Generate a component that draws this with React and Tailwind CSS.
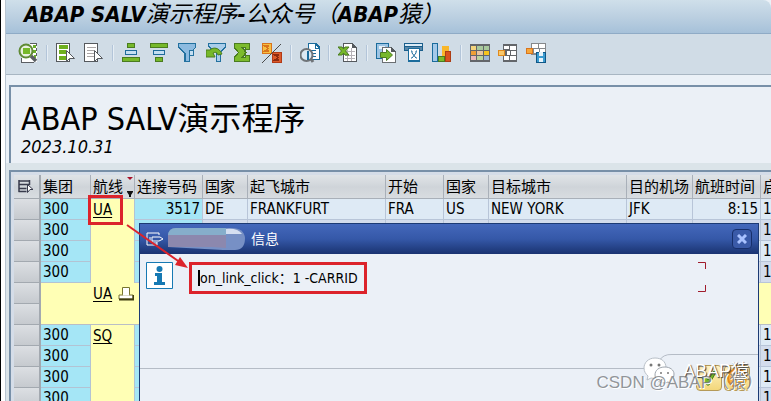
import React from 'react';
import clsx from 'clsx';

const FONT = "font-['DejaVu_Sans_Condensed','Noto_Sans_CJK_SC',sans-serif]";

/* ---------- toolbar icons, 20x20 pixel grid ---------- */

const Icon = ({ children }) => (
  <svg viewBox="0 0 20 20" className="w-5 h-5" shapeRendering="crispEdges" aria-hidden="true">
    {children}
  </svg>
);

const DetailsIcon = () => (
  <Icon>
    <path d="M4 1h15v18H3v-4h1z" fill="#fff" />
    <path d="M15 3h3M15 8h3M16 13h2" stroke="#6cae2c" strokeWidth="3" />
    <path d="M12 .5h7M18.500 0v3M18.500 5v3M18.500 10v3M3 19.500h13M3.500 15v4" stroke="#5b5f63" />
    <g shapeRendering="auto">
      <circle cx="8" cy="8" r="6.500" fill="#e9f0e0" stroke="#5f8a35" strokeWidth="2" />
      <path d="M5 5h7v6H5z" fill="#76b82a" />
      <path d="M13 13l5 5" stroke="#5b5f63" strokeWidth="3.500" />
    </g>
  </Icon>
);

const SelectAllIcon = () => (
  <Icon>
    <path d="M.5.500h13v18H.500z" fill="#fff" stroke="#55595d" />
    <path d="M3 4h9M3 9h7M3 15h7" stroke="#6fb01f" strokeWidth="4" />
    <path d="M10.500 7.500v11l3-3h5z" fill="#fff" stroke="#55595d" shapeRendering="auto" />
  </Icon>
);

const DeselectIcon = () => (
  <Icon>
    <path d="M.5.500h13v18H.500z" fill="#fff" stroke="#55595d" />
    <path d="M3 4.500h9M3 7.500h7M3 10.500h7M3 13.500h7" stroke="#aaa6a6" />
    <path d="M10.500 7.500v11l3-3h5z" fill="#fff" stroke="#55595d" shapeRendering="auto" />
  </Icon>
);

const SortAscIcon = () => (
  <Icon>
    <path d="M5 0h8v5H5z" fill="#4a7c1f" />
    <path d="M6 1h6v3H6z" fill="#76b82a" />
    <path d="M3 7h12v5H3z" fill="#1f6c9b" />
    <path d="M4 8h10v3H4z" fill="#c5dff2" />
    <path d="M0 14h18v5H0z" fill="#4a7c1f" />
    <path d="M1 15h16v3H1z" fill="#76b82a" />
  </Icon>
);

const SortDescIcon = () => (
  <Icon>
    <path d="M0 0h18v5H0z" fill="#4a7c1f" />
    <path d="M1 1h16v3H1z" fill="#76b82a" />
    <path d="M3 7h12v5H3z" fill="#1f6c9b" />
    <path d="M4 8h10v3H4z" fill="#c5dff2" />
    <path d="M5 14h8v5H5z" fill="#4a7c1f" />
    <path d="M6 15h6v3H6z" fill="#76b82a" />
  </Icon>
);

const FilterIcon = () => (
  <Icon>
    <path d="M0 0h18v5l-6 5v9H6v-9L0 5z" fill="#23719f" />
    <path d="M1 1h16v3l-6 6v8H8v-8L1 4z" fill="#8dbbe0" />
    <path d="M11.500 7.500h4v5h-4z" fill="#c5dff2" stroke="#23719f" />
  </Icon>
);

const UnfilterIcon = () => (
  <Icon>
    <path d="M2 0h18v4l-5 5v10h-5V9L2 4z" fill="#23719f" />
    <path d="M3 1h16v2l-5 5v10h-3V8L3 3z" fill="#a9cdea" />
    <path
      d="M0 7l4 0c3-3 9-3 12 4l-4 1c-1-3-3-3-5-2l2 4H0z"
      fill="#76b82a"
      stroke="#4a7c1f"
      shapeRendering="auto"
    />
  </Icon>
);

const SumIcon = () => (
  <Icon>
    <path d="M0 0h16v7h-5V5h-1l3 4.500L10 14h1v-2h5v7H0v-5l4-4.500L0 5z" fill="#4a7c1f" />
    <path d="M1 1h14v5h-3V4H7l4 5.500L7 15h5v-2h3v5H1v-3l4-5.500L1 4z" fill="#7cbb2c" />
  </Icon>
);

const SubtotalIcon = () => (
  <Icon>
    <path d="M0 0h10v11H0z" fill="#d9741c" />
    <path d="M1 1h8v9H1z" fill="#f6bf42" />
    <path d="M7 3H3l3 2.500L3 8h4" fill="none" stroke="#d9741c" strokeWidth="1.500" />
    <path d="M10 9h10v11H10z" fill="#b23a16" />
    <path d="M11 10h8v9h-8z" fill="#dc5a2a" />
    <path d="M17 12h-4l3 2.500-3 2.500h4" fill="none" stroke="#8c2a10" strokeWidth="1.500" />
    <path d="M19 1L0 20" stroke="#4b4b4b" shapeRendering="auto" />
  </Icon>
);

const PreviewIcon = () => (
  <Icon>
    <path d="M8.500.500h7l4 4v12h-11z" fill="#fff" stroke="#1b6c9c" strokeWidth="1.500" />
    <path d="M15 1v4h4M11 7.500h5M11 10.500h5M11 13.500h5" fill="none" stroke="#1b6c9c" />
    <g shapeRendering="auto">
      <circle cx="6.500" cy="12" r="6" fill="#dce9f3" stroke="#6f7478" strokeWidth="2" />
      <path d="M8 8v9" stroke="#1b6c9c" strokeWidth="2" />
      <path d="M11 16l2 3" stroke="#6f7478" strokeWidth="3" />
    </g>
  </Icon>
);

const ExcelIcon = () => (
  <Icon>
    <path d="M5.500.500h9l4 4v14h-13z" fill="#fff" stroke="#55595d" />
    <path d="M14 0l5 5h-5z" fill="#55595d" />
    <path d="M7 8.500h10M7 12.500h10M7 15.500h10M9.500 7v11M13.500 5v13" stroke="#b5b1b6" />
    <g shapeRendering="auto">
      <path d="M0 4h4l1.500 2L7 4h4L7.500 8l3.500 4H7l-1.500-2L4 12H0l3.500-4z" fill="#76b82a" stroke="#4a7c1f" />
    </g>
  </Icon>
);

const ExportIcon = () => (
  <Icon>
    <path d="M.5.500h12v15H.500z" fill="#9cc4e4" stroke="#1b6c9c" />
    <path d="M3 3h6v3H3z" fill="#e8f2f9" />
    <path d="M6.500 4.500h9l4 4v11h-13z" fill="#fff" stroke="#6b6f72" />
    <path d="M15 4l5 5h-5z" fill="#55595d" />
    <path d="M4.500 9.500h6v-3l6 5.500-6 5.500v-3h-6z" fill="#76b82a" stroke="#4a7c1f" shapeRendering="auto" />
  </Icon>
);

const PrintIcon = () => (
  <Icon>
    <path d="M0 0h19v8H0z" fill="#1b5f8c" />
    <path d="M1 1h17v2H1z" fill="#dcebf6" />
    <path d="M1 4h17v3H1z" fill="#5a87a8" />
    <path d="M4 5h12v14H4z" fill="#1b6c9c" />
    <path d="M5 6h10v11H5z" fill="#fff" />
    <path d="M7 8h1v2l4 5h1M13 8h-1v2l-4 5H7" fill="none" stroke="#1b6c9c" shapeRendering="auto" />
  </Icon>
);

const ChartIcon = () => (
  <Icon>
    <path d="M0 0h6v19H0z" fill="#1b6c9c" />
    <path d="M1 1h4v17H1z" fill="#a5c9e8" />
    <path d="M10 3h7v11h-7z" fill="#f9b72b" />
    <path d="M13 8h6v11h-6z" fill="#ad3d14" />
    <path d="M14 9h4v9h-4z" fill="#d9531f" />
    <path d="M6 13h7v6H6z" fill="#4a7c1f" />
    <path d="M7 14h5v4H7z" fill="#7cbb2c" />
  </Icon>
);

const LayoutIcon = () => (
  <Icon>
    <path d="M0 1h20v18H0z" fill="#63666a" />
    <path d="M1 3h5v4H1z" fill="#f3d47d" />
    <path d="M7 3h6v4H7zM14 3h5v4h-5z" fill="#a8c99d" />
    <path d="M1 8h5v4H1z" fill="#ef9f35" />
    <path d="M7 8h6v4H7z" fill="#e9c5a0" />
    <path d="M14 8h5v4h-5z" fill="#f7c31d" />
    <path d="M1 13h5v4H1z" fill="#e9b9b9" />
    <path d="M7 13h6v4H7z" fill="#b9d39b" />
    <path d="M14 13h5v4h-5z" fill="#9fb5d8" />
  </Icon>
);

const ChangeLayoutIcon = () => (
  <Icon>
    <path d="M5 1h14v18H5z" fill="#63666a" />
    <path d="M6 3h5v3H6zM12 3h6v4h-6zM9 8h3v4H9zM13 8h5v4h-5zM6 13h5v4H6zM12 13h6v4h-6z" fill="#fff" />
    <path d="M0 7h7v6H0z" fill="#e08a1e" />
    <path d="M1 8h5v4H1z" fill="#f9c86a" />
  </Icon>
);

const SaveLayoutIcon = () => (
  <Icon>
    <path d="M5 0h15v12H5z" fill="#85888b" />
    <path d="M6 1h6v4H6zM13 1h6v4h-6zM8 6h5v4H8zM14 6h5v4h-5z" fill="#fff" />
    <path d="M0 5h7v6H0z" fill="#d9741c" />
    <path d="M1 6h5v4H1z" fill="#f6a73a" />
    <path d="M10 9h10v11H10z" fill="#0f5786" />
    <path d="M11 10h8v9h-8z" fill="#3b9bd0" />
    <path d="M13 9h4v4h-4zM13 15h4v4h-4z" fill="#e6f3fa" />
  </Icon>
);

const TOOL_GROUPS = [
  [{ label: 'Details', icon: DetailsIcon }],
  [{ label: 'Select all', icon: SelectAllIcon }, { label: 'Deselect all', icon: DeselectIcon }],
  [
    { label: 'Sort ascending', icon: SortAscIcon },
    { label: 'Sort descending', icon: SortDescIcon },
    { label: 'Filter', icon: FilterIcon },
    { label: 'Delete filter', icon: UnfilterIcon },
    { label: 'Total', icon: SumIcon },
    { label: 'Subtotals', icon: SubtotalIcon },
  ],
  [{ label: 'Print preview', icon: PreviewIcon }],
  [{ label: 'Spreadsheet', icon: ExcelIcon }],
  [
    { label: 'Export', icon: ExportIcon },
    { label: 'Print', icon: PrintIcon },
    { label: 'Graphic', icon: ChartIcon },
  ],
  [
    { label: 'Select layout', icon: LayoutIcon },
    { label: 'Change layout', icon: ChangeLayoutIcon },
    { label: 'Save layout', icon: SaveLayoutIcon },
  ],
];

/* ---------- grid data ---------- */

const COLUMNS = [
  { title: '集团', width: 'w-[50px]' },
  { title: '航线', width: 'w-[44px]', sorted: true },
  { title: '连接号码', width: 'w-[68px]' },
  { title: '国家', width: 'w-[45px]' },
  { title: '起飞城市', width: 'w-[138px]' },
  { title: '开始', width: 'w-[58px]' },
  { title: '国家', width: 'w-[45px]' },
  { title: '目标城市', width: 'w-[138px]' },
  { title: '目的机场', width: 'w-[66px]' },
  { title: '航班时间', width: 'w-[68px]' },
  { title: '启', width: '' },
];

const ROWS = [
  { client: '300', carrier: 'UA', rest: ['3517', 'DE', 'FRANKFURT', 'FRA', 'US', 'NEW YORK', 'JFK', '8:15', '1'] },
  { client: '300', rest: ['', '', '', '', '', '', '', '', '1'] },
  { client: '300', rest: ['', '', '', '', '', '', '', '', '1'] },
  { client: '300', rest: ['', '', '', '', '', '', '', '', '1'] },
  { subtotal: 'UA' },
  { blank: true },
  { client: '300', carrier: 'SQ', rest: ['', '', '', '', '', '', '', '', '1'] },
  { client: '300', rest: ['', '', '', '', '', '', '', '', '1'] },
  { client: '300', rest: ['', '', '', '', '', '', '', '', '1'] },
  { client: '300', rest: ['', '', '', '', '', '', '', '', '1'] },
];

const SelectorCell = () => (
  <td className="p-0 bg-linear-to-b from-[#dcdfe3] to-[#c6cacf] border-b border-r-2 border-[#a3a9b0]" />
);

function GridRow({ row, index }) {
  if (row.subtotal || row.blank) {
    return (
      <tr className="h-[21px]">
        <SelectorCell />
        <td className={clsx('p-0 bg-[#ffffb5]', row.blank && 'border-b border-[#b9bec6]')} />
        <td colSpan={10} className={clsx('p-0 pl-0.5 bg-[#ffffb5]', row.blank && 'border-b border-[#b9bec6]')}>
          {row.subtotal && (
            <div className="flex gap-1.5 items-center">
              <a href="#ua" className="underline underline-offset-2">{row.subtotal}</a>
              <svg viewBox="0 0 16 14" className="w-4 h-3.5" aria-hidden="true">
                <path d="M4.500.500h7v7h-7zM1 8h14v4H1z" fill="#fff" stroke="#77752e" />
                <path d="M5 7.500h6" stroke="#fff" strokeWidth="2" />
                <path d="M1 12.500h14.500V8" fill="none" stroke="#3f3d10" strokeWidth="2" />
              </svg>
            </div>
          )}
        </td>
      </tr>
    );
  }

  return (
    <tr className={clsx('h-[21px]', index % 2 ? 'bg-[#d3dcec]' : 'bg-[#deeaf5]')}>
      <SelectorCell />
      <td className="p-0 pl-0.5 bg-[#a5e6f6] border-r border-b border-[#b3c3d3]">{row.client}</td>
      <td className="p-0 pl-0.5 bg-[#ffffb5] border-r border-[#b3c3d3]">
        {row.carrier && <a href={`#${row.carrier}`} className="underline underline-offset-2">{row.carrier}</a>}
      </td>
      {row.rest.map((value, i) => (
        <td
          key={i}
          className={clsx(
            'p-0 px-0.5 whitespace-nowrap border-b border-[#b8c5d8]',
            i < 8 && 'border-r',
            i === 0 && 'bg-[#a5e6f6]',
            (i === 0 || i === 7) && 'text-right'
          )}
        >
          {value}
        </td>
      ))}
    </tr>
  );
}

function FlightGrid() {
  return (
    <table className="w-full table-fixed border-separate border-spacing-0 text-[15px] leading-5">
      <thead>
        <tr className="h-6 bg-linear-to-b from-[#e0e4e7] via-[#cfd4d9] to-[#d9dde1]">
          <th className="w-[27px] p-0 border-r-2 border-b border-[#a3a9b0]">
            <svg viewBox="0 0 16 13" className="ml-1 w-4 h-[13px]" role="img" aria-label="Select all rows">
              <path d="M.5 1h11M.500 4.500h11M.500 8.500h8M.500 11.500h8M1 0v12M11.500 0v5" fill="none" stroke="#383b4c" strokeWidth="1.500" />
              <path d="M9.500 4.500v8l2.500-3h3z" fill="#fff" stroke="#383b4c" />
            </svg>
          </th>
          {COLUMNS.map((col, i) => (
            <th
              key={i}
              className={clsx(
                'p-0 pl-0.5 text-left font-normal whitespace-nowrap border-b border-[#a9b0b9]',
                i < COLUMNS.length - 1 && 'border-r',
                col.width
              )}
            >
              {col.sorted ? (
                <div className="flex justify-between">
                  {col.title}
                  <svg viewBox="0 0 8 20" className="w-2 h-5" aria-hidden="true">
                    <path d="M1 0h6L4 3z" fill="#a8102a" />
                    <path d="M1 14h6v1L5 18v2H3v-2L1 15z" fill="#111" />
                  </svg>
                </div>
              ) : (
                col.title
              )}
            </th>
          ))}
        </tr>
      </thead>
      <tbody>
        {ROWS.map((row, i) => <GridRow key={i} row={row} index={i} />)}
      </tbody>
    </table>
  );
}

/* ---------- message popup ---------- */

function InfoDialog() {
  return (
    <section
      role="dialog"
      aria-labelledby="dialog-title"
      className="flex absolute right-3 -bottom-5 left-[139px] top-[223px] flex-col border border-[#1c3a74] bg-[#ebf0f7]"
    >
      <header className="flex gap-1 items-center px-1.5 h-[30px] text-white bg-linear-to-b from-[#4468bb] via-[#3558a8] to-[#1a3371]">
        <svg viewBox="0 0 18 14" className="w-[18px] h-3.5" aria-hidden="true">
          <path d="M13 3V1H1v12h10v-3M6 5h8l3 2-4 2H6zM4 5v4M6 9v2h5" fill="none" stroke="#fff" />
        </svg>
        {/* blurred out transaction name */}
        <svg viewBox="0 0 79 24" className="w-[79px] h-6 shrink-0" aria-hidden="true">
          <path d="M0 9Q0 1 8 1h56q12 0 13 10 0 12-10 12H55L0 20z" fill="#7790c5" />
          <path d="M0 8Q1 1 8 1h50v7z" fill="#86aecb" />
          <path d="M58 2q12-1 16 5H58z" fill="#d5dff1" />
          <path d="M0 8h58v13l-14-1H0z" fill="#8c88ae" />
        </svg>
        <h2 id="dialog-title" className="text-sm">信息</h2>
        <button
          type="button"
          aria-label="Close"
          className="flex justify-center items-center ml-auto w-5 h-5 rounded-sm border border-[#172f6b] bg-[#3a5aa8]"
        >
          <svg viewBox="0 0 10 10" className="w-2.5 h-2.5" aria-hidden="true">
            <path d="M1 1l8 8M9 1L1 9" stroke="#a9c2ff" strokeWidth="3" />
          </svg>
        </button>
      </header>

      <div className="flex gap-4 px-1.5 pt-2">
        <svg viewBox="0 0 27 27" className="w-[27px] h-[27px] shrink-0" role="img" aria-label="Information">
          <path d="M.5.500h26v26H.500z" fill="#fff" stroke="#1679b3" />
          <circle cx="13.500" cy="7" r="3" fill="#1679b3" />
          <path d="M9 11h7v9h3v3H8v-3h3v-6H9z" fill="#1679b3" />
        </svg>
        <div className="flex items-center px-1.5 h-8 border-3 border-[#dc232b]">
          <span className="w-0.5 h-4 bg-black" />
          <p className="text-sm whitespace-nowrap">on_link_click：1 -CARRID</p>
        </div>
        <svg viewBox="0 0 8 30" className="mr-[46px] ml-auto w-2 h-[30px] shrink-0" aria-hidden="true">
          <path d="M0 .5h7.500V7M0 29.500h7.500V23" fill="none" stroke="#a01c2c" />
        </svg>
      </div>

      <footer className="flex mt-[60px]">
        <div className="flex-1 mt-3.5 border-t border-[#b5bcc6]" />
        <svg viewBox="0 0 26 15" className="w-[26px] h-[15px]" aria-hidden="true">
          <path d="M0 14.500Q9 14 13 7T26 .500" fill="none" stroke="#b5bcc6" />
        </svg>
        <div className="flex gap-0.5 justify-end pt-2.5 pr-2 w-[86px] border-t border-[#b5bcc6]">
          <button type="button" aria-label="Continue" className="flex justify-center items-center w-[26px] h-[26px] rounded-sm border border-[#b59a58] bg-linear-to-b from-[#fff3c4] to-[#f3d77a]">
            <svg viewBox="0 0 16 16" className="w-4 h-4" aria-hidden="true">
              <path d="M1 8l4-1 2 3 6-9 2 1-7 13H6z" fill="#76b82a" stroke="#3f7a1c" />
            </svg>
          </button>
          <button type="button" aria-label="Help" className="flex justify-center items-center w-[26px] h-[26px] rounded-sm border border-[#b59a58] bg-linear-to-b from-[#fff3c4] to-[#f3d77a]">
            <svg viewBox="0 0 22 22" className="w-[22px] h-[22px]" aria-hidden="true">
              <circle cx="11" cy="11" r="9" fill="#f7b540" stroke="#e18a1c" strokeWidth="2" />
              <path d="M7 8q1-4 5-3t2 5l-3 3v2" fill="none" stroke="#fff" strokeWidth="2" />
            </svg>
          </button>
        </div>
      </footer>
    </section>
  );
}

function Watermarks() {
  return (
    <div className="absolute inset-0 pointer-events-none">
      <div className="flex absolute right-[22px] bottom-4 gap-2 items-center">
        <svg viewBox="0 0 32 28" className="w-8 h-7" aria-hidden="true">
          <path d="M12 1C5 1 1 6 1 11c0 4 2 6 4 8l-1 4 4-2c9 2 15-3 15-10S18 1 12 1z" fill="#fff" stroke="#b9c0c8" />
          <path d="M22 10c-6 0-10 3-10 8s5 8 10 8l3-1 4 2-1-4c2-1 3-3 3-6 0-4-4-7-9-7z" fill="#fff" stroke="#9fa6ae" />
          <circle cx="8" cy="8" r="1.500" fill="#777" />
          <circle cx="16" cy="8" r="1.500" fill="#777" />
          <circle cx="18" cy="16" r="1" fill="#777" />
          <circle cx="25" cy="16" r="1" fill="#777" />
        </svg>
        <span className="text-lg leading-7 text-white font-['Liberation_Sans','Noto_Sans_CJK_SC',sans-serif] text-shadow-[1px_1px_1px_#333]">
          ABAP猿
        </span>
      </div>
      <span className="absolute right-2 bottom-1.5 text-[17px] leading-6 whitespace-nowrap text-[#777b80]/80 font-['Liberation_Sans','Noto_Sans_CJK_SC',sans-serif] text-shadow-[1px_1px_0_#ffffff]">
        CSDN @ABAP（猿）
      </span>
    </div>
  );
}

// CJK part of the window title, regular weight next to the bold Latin text
const Han = ({ children }) => <span className="text-[23px] font-normal">{children}</span>;

export default function App() {
  return (
    <div className={clsx('flex overflow-hidden relative h-screen text-black bg-white', FONT)}>
      <div className="w-[5px] shrink-0 bg-white border-l border-black" />

      <main className="flex-1 min-w-0 border-l border-[#b9c5d1] bg-[#ebf1f7]">
        <header className="h-[34px] pl-[18px] rounded-tr-lg bg-linear-to-b from-[#cfdfea] via-[#bcd0e1] to-[#a6c1d9] border-b border-[#8fabc6]">
          <h1 className="text-[22px] leading-7 italic font-bold whitespace-nowrap">
            ABAP SALV<Han>演示程序</Han>-<Han>公众号（</Han>ABAP<Han>猿）</Han>
          </h1>
        </header>

        <nav className="flex gap-2 items-center pb-0.5 pl-3 h-[41px] bg-[#d0dce6] border-b border-[#a8b6c2]" aria-label="Toolbar">
          {TOOL_GROUPS.map((group, g) => (
            <React.Fragment key={g}>
              {g > 0 && <span className="w-0.5 h-4 border-l border-[#b3c5d9] bg-[#e6eef5]" />}
              {group.map((tool) => (
                <button key={tool.label} type="button" aria-label={tool.label}>
                  <tool.icon />
                </button>
              ))}
            </React.Fragment>
          ))}
        </nav>

        <div className="pt-2.5 pl-[3px]">
          <div className="pt-3.5 pl-2.5 h-[78px] border-t-2 border-l-2 border-[#7890a8] bg-[#ebf0f6]">
            <h2 className="text-[32px] leading-9 whitespace-nowrap">ABAP SALV演示程序</h2>
            <p className="text-lg leading-5 italic">2023.10.31</p>
          </div>
        </div>

        <div className="pt-[7px] pl-[3px] bg-[#dbe4e9]">
          <div className="pt-[3px] pl-[3px] border-t-2 border-l-2 border-[#7890a8] bg-[#d5dde8]">
            <FlightGrid />
          </div>
        </div>
      </main>

      <InfoDialog />

      {/* marker round the clicked cell and the arrow to the message */}
      <div className="absolute left-[88px] top-[195px] w-[35px] h-[30px] border-3 border-[#dc232b]" />
      <svg viewBox="0 0 64 48" className="absolute left-[126px] top-[223px] w-16 h-12" aria-hidden="true">
        <path d="M1 2l54 38" stroke="#dc232b" strokeWidth="2" />
        <path d="M62 45l-13-3 5-8z" fill="#dc232b" />
      </svg>

      <Watermarks />
    </div>
  );
}
